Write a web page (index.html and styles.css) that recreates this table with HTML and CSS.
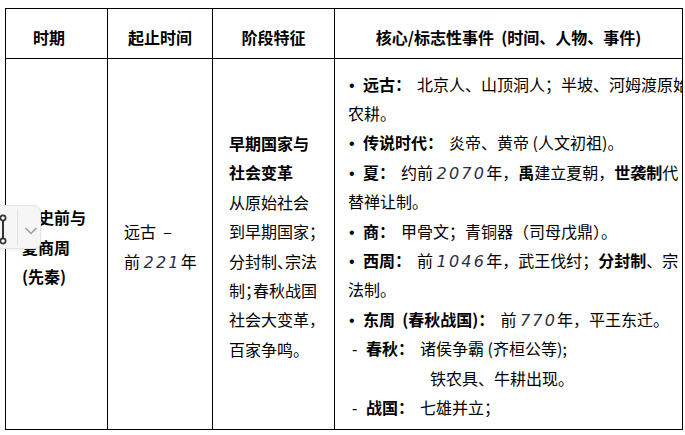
FILE: index.html
```html
<!DOCTYPE html>
<html lang="zh-CN">
<head>
<meta charset="utf-8">
<title>史前与夏商周</title>
<link rel="stylesheet" href="styles.css">
</head>
<body>
<div class="page">
  <table class="hist">
    <colgroup>
      <col class="c1"><col class="c2"><col class="c3"><col class="c4">
    </colgroup>
    <thead>
      <tr>
        <th class="h-period">时期</th>
        <th>起止时间</th>
        <th>阶段特征</th>
        <th>核心/标志性事件 &nbsp;(时间、人物、事件)</th>
      </tr>
    </thead>
    <tbody>
      <tr>
        <td class="period">远史前与夏商周 (先秦)</td>
        <td class="range">远古 &nbsp;–<br>前 <span class="num">221</span>年</td>
        <td class="feature"><strong>早期国家与社会变革</strong><br>从原始社会到早期国家；分封制、宗法制；春秋战国社会大变革，百家争鸣。</td>
        <td class="events">
          <div class="clip">
            <div class="inner">
              <p><span class="dot">•</span><b class="lbl">远古：</b>北京人、山顶洞人；半坡、河姆渡原始农耕。</p>
              <p><span class="dot">•</span><b class="lbl">传说时代：</b>炎帝、黄帝 (人文初祖)。</p>
              <p><span class="dot">•</span><b class="lbl">夏：</b>约前 <span class="num">2070</span>年，<b>禹</b>建立夏朝，<b>世袭制</b>代替禅让制。</p>
              <p><span class="dot">•</span><b class="lbl">商：</b>甲骨文；青铜器（司母戊鼎）。</p>
              <p><span class="dot">•</span><b class="lbl">西周：</b>前 <span class="num">1046</span>年，武王伐纣；<b>分封制</b>、宗法制。</p>
              <p><span class="dot">•</span><b class="lbl">东周 &nbsp;(春秋战国)：</b>前 <span class="num">770</span>年，平王东迁。</p>
              <p><span class="dash">-</span><b class="lbl">春秋：</b>诸侯争霸 (齐桓公等);</p>
              <p class="cont">铁农具、牛耕出现。</p>
              <p><span class="dash">-</span><b class="lbl">战国：</b>七雄并立；</p>
            </div>
          </div>
        </td>
      </tr>
    </tbody>
  </table>

  <div class="float-tool">
    <svg class="tool-svg" width="47" height="44" viewBox="0 0 47 44" aria-hidden="true">
      <line x1="9" y1="15" x2="9" y2="34" stroke="#333" stroke-width="2"/>
      <circle cx="9" cy="13" r="2.6" fill="#fff" stroke="#333" stroke-width="1.7"/>
      <circle cx="9" cy="36" r="2.6" fill="#fff" stroke="#333" stroke-width="1.7"/>
      <line x1="23.5" y1="4" x2="23.5" y2="40" stroke="#e2e2e2" stroke-width="1"/>
      <polyline points="31.5,23 37,28.5 42.5,23" fill="none" stroke="#9a9a9a" stroke-width="1.5"/>
    </svg>
  </div>
</div>
</body>
</html>
```

FILE: styles.css
```css
html, body {
  margin: 0;
  padding: 0;
  background: #fff;
}

body {
  font-family: "Noto Sans CJK SC", "Noto Sans", sans-serif;
  color: #000;
}

.page {
  position: relative;
  padding: 8px 0 0 5px;
}

.hist {
  border-collapse: collapse;
  table-layout: fixed;
  width: 677px;
}

.c1 { width: 102px; }
.c2 { width: 105px; }
.c3 { width: 122px; }
.c4 { width: 348px; }

.hist th,
.hist td {
  border: 1px solid #000;
}

.hist th {
  height: 43px;
  padding: 6px 0 0;
  font-size: 16px;
  font-weight: 700;
  text-align: center;
  vertical-align: middle;
  line-height: 20px;
}

.hist th.h-period {
  padding-right: 15px;
}

.hist td {
  height: 365px;
  padding: 5px 14px 0 16px;
  vertical-align: middle;
  font-size: 16px;
  line-height: 29.4px;
  text-align: left;
}

.hist td.period {
  padding-top: 7px;
  height: 363px;
  font-weight: 700;
}

.feature {
  font-feature-settings: "halt";
}

.feature strong {
  font-weight: 700;
}

.num {
  font-family: "DejaVu Sans", sans-serif;
  font-style: italic;
  font-size: 16px;
  line-height: 1;
  letter-spacing: 2.2px;
  color: #2b2f45;
}

.hist td.events {
  padding: 4px 0 0 13px;
  height: 366px;
}

.clip {
  overflow: hidden;
}

.inner {
  width: 343px;
}

.inner p {
  margin: 0;
}

.dot {
  display: inline-block;
  width: 15px;
  padding-left: 1px;
  box-sizing: border-box;
  line-height: 1;
  font-family: "Liberation Sans", sans-serif;
}

.dash {
  display: inline-block;
  width: 18px;
  padding-left: 4px;
  box-sizing: border-box;
  line-height: 1;
  font-family: "Liberation Sans", sans-serif;
}

.lbl {
  font-weight: 700;
  margin-right: 6px;
}

.inner p.cont {
  padding-left: 82px;
}

.float-tool {
  position: absolute;
  left: -6px;
  top: 205px;
  width: 47px;
  height: 44px;
  background: #f6f6f6;
  border: 1px solid #e4e4e4;
  border-radius: 7px;
  box-shadow: 0 1px 3px rgba(0, 0, 0, 0.08);
  box-sizing: border-box;
}

.tool-svg {
  display: block;
  margin: -1px;
}
```
